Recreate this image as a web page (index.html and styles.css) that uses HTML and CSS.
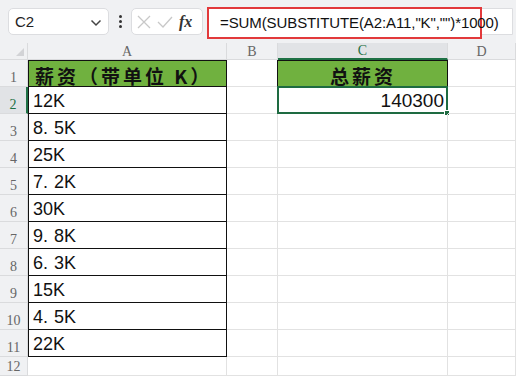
FILE: index.html
```html
<!DOCTYPE html>
<html lang="zh">
<head>
<meta charset="utf-8">
<link rel="stylesheet" href="styles.css">
</head>
<body>
<div class="toolbar">
  <div class="namebox"><span>C2</span>
    <svg class="chev" width="12" height="8" viewBox="0 0 12 8"><path d="M1.5 1.5 L6 6 L10.5 1.5" fill="none" stroke="#444" stroke-width="1.5"/></svg>
  </div>
  <div class="vdots"><i></i><i></i><i></i></div>
  <div class="fxbox">
    <svg width="16" height="16" viewBox="0 0 16 16"><path d="M2 2 L14 14 M14 2 L2 14" stroke="#c8c8c8" stroke-width="1.3" fill="none"/></svg>
    <svg width="18" height="16" viewBox="0 0 18 16"><path d="M2 8 L7 13 L16 3" stroke="#c8c8c8" stroke-width="1.3" fill="none"/></svg>
    <span class="fx">fx</span>
  </div>
  <div class="formula">
    <div class="formula-hl">=SUM(SUBSTITUTE(A2:A11,"K","")*1000)</div>
  </div>
</div>
<div class="sheet">
  <div class="corner"><span class="tri"></span></div>
  <div class="colh">A</div>
  <div class="colh">B</div>
  <div class="colh sel">C</div>
  <div class="colh">D</div>

  <div class="rowh">1</div>
  <div class="cell a head top">薪资（带单位 K）</div>
  <div class="cell"></div>
  <div class="cell c1">总薪资</div>
  <div class="cell"></div>

  <div class="rowh sel">2</div>
  <div class="cell a">12K</div>
  <div class="cell"></div>
  <div class="cell c2">140300<span class="handle"></span></div>
  <div class="cell"></div>

  <div class="rowh">3</div>
  <div class="cell a">8<span class="dot">.</span>5K</div>
  <div class="cell"></div><div class="cell"></div><div class="cell"></div>

  <div class="rowh">4</div>
  <div class="cell a">25K</div>
  <div class="cell"></div><div class="cell"></div><div class="cell"></div>

  <div class="rowh">5</div>
  <div class="cell a">7<span class="dot">.</span>2K</div>
  <div class="cell"></div><div class="cell"></div><div class="cell"></div>

  <div class="rowh">6</div>
  <div class="cell a">30K</div>
  <div class="cell"></div><div class="cell"></div><div class="cell"></div>

  <div class="rowh">7</div>
  <div class="cell a">9<span class="dot">.</span>8K</div>
  <div class="cell"></div><div class="cell"></div><div class="cell"></div>

  <div class="rowh">8</div>
  <div class="cell a">6<span class="dot">.</span>3K</div>
  <div class="cell"></div><div class="cell"></div><div class="cell"></div>

  <div class="rowh">9</div>
  <div class="cell a">15K</div>
  <div class="cell"></div><div class="cell"></div><div class="cell"></div>

  <div class="rowh">10</div>
  <div class="cell a">4<span class="dot">.</span>5K</div>
  <div class="cell"></div><div class="cell"></div><div class="cell"></div>

  <div class="rowh">11</div>
  <div class="cell a">22K</div>
  <div class="cell"></div><div class="cell"></div><div class="cell"></div>

  <div class="rowh">12</div>
  <div class="cell"></div>
  <div class="cell"></div><div class="cell"></div><div class="cell"></div>
</div>
</body>
</html>
```

FILE: styles.css
```css
* { box-sizing: border-box; }
html, body { margin: 0; padding: 0; }
body {
  width: 516px;
  height: 376px;
  overflow: hidden;
  background: #fff;
  font-family: "Liberation Sans", Arial, "Noto Sans CJK SC", sans-serif;
}
.toolbar {
  height: 43px;
  background: #f0f1f3;
  display: flex;
  align-items: center;
  padding: 0 0 0 8px;
}
.namebox {
  width: 101px;
  height: 27px;
  background: #fff;
  border: 1px solid #dcdde0;
  border-radius: 5px;
  display: flex;
  align-items: center;
  justify-content: space-between;
  padding: 0 6px 0 6px;
  font-size: 15px;
  color: #222;
}
.chev { margin-top: 2px; }
.vdots {
  width: 22px;
  display: flex;
  flex-direction: column;
  align-items: center;
  gap: 2px;
}
.vdots i {
  width: 3px; height: 3px; border-radius: 50%;
  background: #333;
}
.fxbox {
  width: 72px;
  height: 27px;
  background: #fff;
  border: 1px solid #dcdde0;
  border-radius: 5px;
  display: flex;
  align-items: center;
  padding: 0 0 0 4px;
  gap: 4px;
}
.fx {
  font-family: "Liberation Serif", serif;
  font-style: italic;
  font-weight: bold;
  font-size: 16px;
  color: #333;
  margin-left: 1px;
}
.formula {
  margin-left: 4px;
  flex: 1;
  height: 27px;
  background: #fff;
  border: 1px solid #dcdde0;
  border-radius: 5px 0 0 5px;
  margin-right: 3px;
  position: relative;
}
.formula-hl {
  position: absolute;
  left: -1px;
  top: -2px;
  width: 275px;
  height: 32px;
  border: 2px solid #e2393b;
  background: #fff;
  font-size: 15px;
  letter-spacing: -0.1px;
  color: #111;
  padding-left: 11px;
  line-height: 28px;
  white-space: nowrap;
}
.sheet {
  display: grid;
  grid-template-columns: 28px 199px 51px 170px 1fr;
  grid-template-rows: 17px repeat(11, 27px) 1fr;
  height: 333px;
}
.corner, .colh, .rowh {
  background: #f0f1f3;
  border-right: 1px solid #dadbdd;
  border-bottom: 1px solid #dadbdd;
  color: #666;
  font-family: "Liberation Serif", "DejaVu Serif", serif;
}
.corner { position: relative; }
.tri {
  position: absolute;
  right: 3px; bottom: 3px;
  width: 0; height: 0;
  border-left: 8px solid transparent;
  border-bottom: 8px solid #d2d3d6;
}
.colh {
  font-size: 14px;
  display: flex;
  align-items: center;
  justify-content: center;
  line-height: 1;
  padding-top: 1px;
}
.colh.sel {
  background: #e1e3e6;
  border-bottom: 2px solid #1e7145;
  color: #1e7145;
}
.rowh {
  font-size: 14px;
  display: flex;
  align-items: flex-end;
  justify-content: center;
  padding-bottom: 1px;
  line-height: 1;
}
.rowh.sel {
  background: #e1e3e6;
  border-right: 2px solid #1e7145;
  color: #1e7145;
}
.cell {
  border-right: 1px solid #e2e2e2;
  border-bottom: 1px solid #e2e2e2;
  font-size: 18px;
  color: #111;
  display: flex;
  align-items: flex-end;
  padding: 0 4px 3px 5px;
  line-height: 1;
  position: relative;
}
.cell.a {
  border-right-color: #111;
  border-bottom-color: #111;
  box-shadow: inset 1px 0 0 #111;
}
.cell.a.top {
  box-shadow: inset 1px 1px 0 #111;
}
.dot { margin-right: 6px; }
.head {
  background: #70b13f;
  font-family: "Noto Sans CJK SC", sans-serif;
  font-weight: bold;
  font-size: 19px;
  letter-spacing: 3px;
  padding-left: 7px;
  padding-bottom: 1px;
}
.c1 {
  background: #70b13f;
  border: 1px solid #111;
  border-left: 1px solid #111;
  font-family: "Noto Sans CJK SC", sans-serif;
  font-weight: bold;
  font-size: 19px;
  letter-spacing: 3px;
  justify-content: center;
  padding-bottom: 1px;
  margin-left: -1px;
}
.c2 {
  border: 2px solid #1e6b41;
  margin-left: -1px;
  margin-top: -1px;
  justify-content: flex-end;
  padding-right: 2px;
  padding-bottom: 2px;
  font-size: 19px;
}
.handle {
  position: absolute;
  right: -4px;
  bottom: -4px;
  width: 6px;
  height: 6px;
  background: #1e6b41;
  border: 1px solid #fff;
}
```
